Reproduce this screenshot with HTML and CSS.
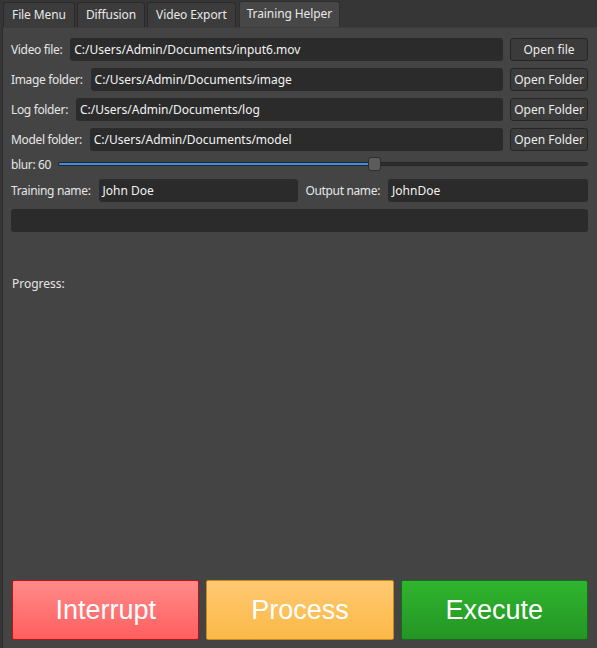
FILE: index.html
```html
<!DOCTYPE html>
<html>
<head>
<meta charset="utf-8">
<link rel="stylesheet" href="styles.css">
</head>
<body>
<div class="tabs">
  <div class="tab">File Menu</div>
  <div class="tab">Diffusion</div>
  <div class="tab">Video Export</div>
  <div class="tab active">Training Helper</div>
</div>
<div class="panel">
  <div class="row">
    <span class="lbl">Video file:</span>
    <div class="field">C:/Users/Admin/Documents/input6.mov</div>
    <div class="btn">Open file</div>
  </div>
  <div class="row">
    <span class="lbl">Image folder:</span>
    <div class="field">C:/Users/Admin/Documents/image</div>
    <div class="btn">Open Folder</div>
  </div>
  <div class="row">
    <span class="lbl">Log folder:</span>
    <div class="field">C:/Users/Admin/Documents/log</div>
    <div class="btn">Open Folder</div>
  </div>
  <div class="row">
    <span class="lbl">Model folder:</span>
    <div class="field">C:/Users/Admin/Documents/model</div>
    <div class="btn">Open Folder</div>
  </div>
  <div class="slider-row">
    <span class="lbl">blur: 60</span>
    <div class="slider">
      <div class="groove"><div class="fill"></div></div>
      <div class="handle"></div>
    </div>
  </div>
  <div class="row">
    <span class="lbl">Training name:</span>
    <div class="field">John Doe</div>
    <span class="lbl">Output name:</span>
    <div class="field">JohnDoe</div>
  </div>
  <div class="progressbar"></div>
  <div class="progress-lbl">Progress:</div>
  <div class="actions">
    <div class="action interrupt">Interrupt</div>
    <div class="action process">Process</div>
    <div class="action execute">Execute</div>
  </div>
</div>
</body>
</html>
```
FILE: styles.css
```css
* { box-sizing: border-box; }
html, body { margin: 0; padding: 0; }
body {
  width: 597px;
  height: 648px;
  overflow: hidden;
  background: #363636;
  font-family: "Noto Sans", "Open Sans", sans-serif;
  font-size: 12px;
  color: #e6e6e6;
}
.tabs {
  display: flex;
  align-items: flex-end;
  height: 27px;
  padding-left: 3px;
  gap: 2px;
}
.tab {
  height: 25px;
  line-height: 23px;
  padding: 0 8px;
  background: #3c3c3c;
  border: 1px solid #2a2a2a;
  border-bottom: none;
  border-radius: 3px 3px 0 0;
  color: #e8e8e8;
  letter-spacing: -0.1px;
}
.tab.active {
  height: 26px;
  line-height: 24px;
  background: #474747;
  border-color: #2f2f2f;
  padding: 0 7px;
  margin-left: 1px;
}
.panel {
  margin-left: 2px;
  height: 621px;
  background: #444444;
  border-left: 1px solid #2c2c2c;
  border-top: 1px solid #3c3c3c;
  padding: 10px 9px 8px 8px;
  display: flex;
  flex-direction: column;
}
.row {
  display: flex;
  align-items: center;
  height: 23px;
  margin-bottom: 7px;
}
.lbl {
  white-space: nowrap;
  margin-right: 8px;
  letter-spacing: -0.35px;
}
.field {
  flex: 1;
  height: 23px;
  line-height: 23px;
  background: #2b2b2b;
  border-radius: 3px;
  padding: 0 4px;
  color: #f2f2f2;
  white-space: nowrap;
  overflow: hidden;
}
.row .field + .lbl { margin-left: 7px; }
.btn {
  width: 78px;
  height: 23px;
  margin-left: 7px;
  line-height: 21px;
  text-align: center;
  background: #3b3b3b;
  border: 1px solid #262626;
  border-radius: 3px;
  color: #ececec;
  white-space: nowrap;
}
.slider-row {
  display: flex;
  align-items: center;
  height: 14px;
  margin-top: -1px;
  margin-bottom: 8px;
}
.slider-row .lbl { margin-right: 7px; }
.slider {
  flex: 1;
  position: relative;
  height: 14px;
}
.groove {
  position: absolute;
  left: 0;
  right: 0;
  top: 5px;
  height: 4px;
  background: #2e2e2e;
  border: 1px solid #252525;
  border-radius: 2px;
}
.fill {
  width: 312px;
  height: 100%;
  background: #3f8ee6;
  border-radius: 2px;
}
.handle {
  position: absolute;
  left: 310px;
  top: 0;
  width: 13px;
  height: 14px;
  background: #5c5c5c;
  border: 1px solid #2e2e2e;
  border-radius: 3px;
}
.progressbar {
  height: 23px;
  background: #2b2b2b;
  border-radius: 3px;
}
.progress-lbl {
  margin-top: 43px;
  padding-left: 1px;
}
.actions {
  margin-top: auto;
  display: flex;
  gap: 7px;
  padding-left: 1px;
}
.action {
  flex: 1;
  height: 60px;
  display: flex;
  align-items: center;
  justify-content: center;
  font-family: "Liberation Sans", Arial, sans-serif;
  font-size: 27px;
  color: #ffffff;
  border-radius: 2px;
}
.interrupt {
  background: linear-gradient(#ff8b8b, #ff5e5e);
  border: 1px solid #c11010;
}
.process {
  background: linear-gradient(#ffc872, #fbb946);
  border: 1px solid #c98a1c;
}
.execute {
  background: linear-gradient(#2fb52f, #249524);
  border: 1px solid #186c18;
}
```
